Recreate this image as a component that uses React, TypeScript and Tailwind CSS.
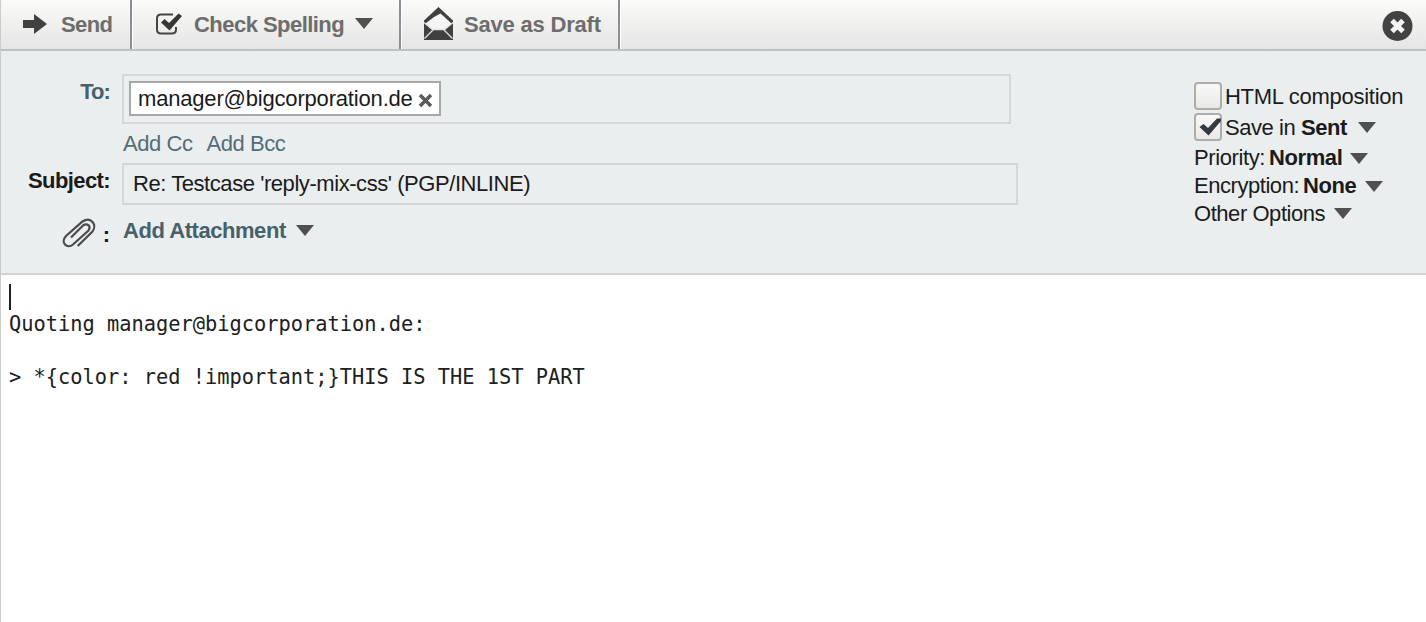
import type { ReactNode } from "react";

function Caret({ className = "" }: { className?: string }) {
  return (
    <svg className={"shrink-0 " + className} width="18" height="11" viewBox="0 0 18 11">
      <path d="M0 0H18L9 11Z" fill="#4f504f" />
    </svg>
  );
}

function ToolButton({ className, children }: { className: string; children: ReactNode }) {
  return (
    <button
      className={
        "flex h-[49px] shrink-0 items-center border-r-2 border-[#8c8c92] text-left font-bold text-[#6c6d6c] shadow-[1px_0_0_#fff] " +
        className
      }
    >
      {children}
    </button>
  );
}

function Checkbox({ checked = false }: { checked?: boolean }) {
  return (
    <span className="flex h-7 w-7 shrink-0 rounded-[4px] border-2 border-[#aeada9] bg-linear-to-b from-[#f8f8f8] to-[#e9e9e8]">
      {checked && (
        <svg width="24" height="24" viewBox="0 0 24 24" overflow="visible">
          <path d="M3.500 12L7.500 9L12 13L21 3.500H25V6L12.500 20.500Z" fill="#34393d" />
        </svg>
      )}
    </span>
  );
}

export default function App() {
  return (
    <div className="flex h-[622px] w-[1426px] flex-col overflow-hidden border-l border-[#cbcccc] bg-white font-['Liberation_Sans',Arial,sans-serif] text-[22px] leading-7 whitespace-nowrap text-[#1b1b1b]">
      <header className="flex h-[51px] shrink-0 border-b-2 border-[#b9c3c3] bg-linear-to-b from-[#fbfbf9] to-[#e5e5e5]">
        <ToolButton className="w-[131px] pl-[21px]">
          <svg className="-mt-0.5" width="26" height="22" viewBox="0 0 26 22">
            <path d="M1 7H12V1L25 11L12 21V15H1Z" fill="#414141" />
          </svg>
          <span className="ml-[13px] tracking-[-0.6px]">Send</span>
        </ToolButton>
        <ToolButton className="w-[269px] pl-[23px]">
          <svg className="-mt-0.5" width="28" height="24" viewBox="0 0 28 24">
            <path
              d="M18 2.500H6Q2 2.500 2 6.500V17.500Q2 21.500 6 21.500H17Q21 21.500 21 17.500V15"
              fill="none"
              stroke="#454545"
              strokeWidth="2"
            />
            <path d="M6 10.500L9.500 7L14 11L23.500 1.500L27 4L14.500 18.500Z" fill="#373737" />
          </svg>
          <span className="ml-[11px] tracking-[-0.54px]">Check Spelling</span>
          <Caret className="-mt-0.5 ml-[11px]" />
        </ToolButton>
        <ToolButton className="w-[219px] pl-[22px]">
          <svg className="-mt-0.5" width="31" height="35" viewBox="0 0 31 35">
            <path d="M15.500 1L30 14.500V34H1V14.500Z" fill="#404040" />
            <path d="M2.500 17.500L11 11L17.500 7.500L22 11.500L28.500 17.500L22 23.500H9Z" fill="#f4f4f4" />
            <path d="M1 16.500L10 24L1.500 32.500M30 16.500L21 24L29.500 32.500M9.500 23.500H21.500" fill="none" stroke="#e4e4e4" strokeWidth="1.300" />
          </svg>
          <span className="ml-[10px] tracking-[-0.2px]">Save as Draft</span>
        </ToolButton>
        <button className="mt-[11px] mr-[13px] ml-auto h-[31px] w-[31px]">
          <svg width="31" height="31" viewBox="0 0 31 31">
            <circle cx="15.500" cy="15" r="15" fill="#414241" />
            <path d="M10 9.500L21 20.500M21 9.500L10 20.500" stroke="#f4f4f4" strokeWidth="5" />
          </svg>
        </button>
      </header>

      <section className="flex h-[224px] shrink-0 justify-between border-b-2 border-[#d2d4d4] bg-[#eaeeef]">
        <div className="flex flex-col pt-[23px]">
          <div className="flex h-[50px]">
            <label className="mt-[4px] w-[109px] text-right font-bold tracking-[-0.9px] text-[#47616b]">To:</label>
            <div className="ml-[12px] w-[889px] border-2 border-[#d4d6d7] p-[5px]">
              <div className="flex h-[35px] w-[312px] items-center border-2 border-[#a7a8a8] bg-white pl-[7px]">
                <span className="tracking-[-0.18px]">manager@bigcorporation.de</span>
                <svg className="mt-[3px] ml-[5px]" width="15" height="15" viewBox="0 0 15 15">
                  <path d="M2 2L13 13M13 2L2 13" stroke="#5b5b5b" strokeWidth="3.500" />
                </svg>
              </div>
            </div>
          </div>
          <div className="flex h-[39px] gap-[14px] pt-[6px] pl-[122px] tracking-[-0.45px] text-[#526d77]">
            <a>Add Cc</a>
            <a>Add Bcc</a>
          </div>
          <div className="flex h-[42px]">
            <label className="mt-[4px] w-[109px] text-right font-bold tracking-[-0.6px]">Subject:</label>
            <div className="ml-[12px] flex w-[896px] items-center border-2 border-[#d4d6d7] pl-[9px] tracking-[-0.44px]">
              Re: Testcase 'reply-mix-css' (PGP/INLINE)
            </div>
          </div>
          <div className="flex pt-[12px]">
            <svg className="ml-[61px]" width="34" height="31" viewBox="0 0 34 31">
              <path
                d="M15.700 29L30.500 14.500C35.500 8 29 -1 20.500 4.500L4 19C-2 25.500 5 32.500 11 27.500L26.500 13.500C29.500 9 25 5.500 21 8.500L9 20.500"
                fill="none"
                stroke="#4b4b4b"
                strokeWidth="2.200"
              />
            </svg>
            <span className="mt-[4px] w-[14px] text-right font-bold">:</span>
            <a className="ml-[13px] flex font-bold tracking-[-0.45px] text-[#47616b]">
              Add Attachment
              <Caret className="mt-[8px] ml-[10px]" />
            </a>
          </div>
        </div>

        <div className="flex w-[232px] flex-col pt-[31px]">
          <label className="flex h-[31px]">
            <Checkbox />
            <span className="mt-px ml-[3px] tracking-[-0.27px]">HTML composition</span>
          </label>
          <label className="flex h-[31px]">
            <Checkbox checked />
            <span className="mt-px ml-[3px] tracking-[-0.45px]">
              Save in <b>Sent</b>
            </span>
            <Caret className="mt-[9px] ml-[11px]" />
          </label>
          <div className="flex h-7 tracking-[-0.4px]">
            Priority:<b className="ml-[4px]">Normal</b>
            <Caret className="mt-[9px] ml-[8px]" />
          </div>
          <div className="flex h-7 tracking-[-0.45px]">
            Encryption:<b className="ml-[4px]">None</b>
            <Caret className="mt-[9px] ml-[9px]" />
          </div>
          <div className="flex h-7 tracking-[-0.45px]">
            Other Options
            <Caret className="mt-[8px] ml-[9px]" />
          </div>
        </div>
      </section>

      <main className="grow pt-[9px] pl-[8px] font-['DejaVu_Sans_Mono',monospace] leading-[26px] text-[#202020]">
        <div className="h-[27px]">
          <div className="h-[26px] w-[2px] bg-[#202020]" />
        </div>
        <div className="h-[26px] w-max origin-left scale-x-[0.925]">Quoting manager@bigcorporation.de:</div>
        <div className="h-[27px]" />
        <div className="h-[26px] w-max origin-left scale-x-[0.925]">
          &gt; *&#123;color: red !important;&#125;THIS IS THE 1ST PART
        </div>
      </main>
    </div>
  );
}
